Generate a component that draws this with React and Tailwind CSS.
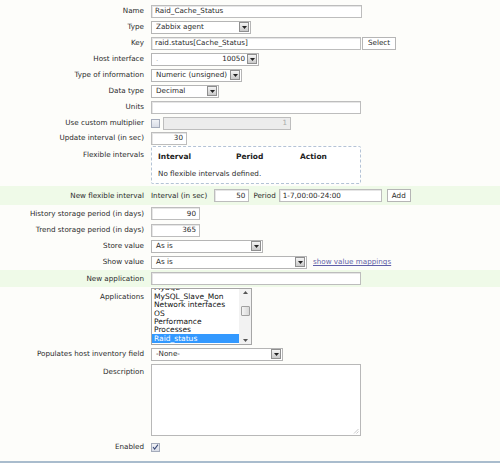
import React from "react";

const Arrow = () => (
  <span className="flex h-[10px] w-[10px] shrink-0 items-center justify-center border border-[#8f8f8f] bg-gradient-to-b from-[#f4f4f4] to-[#c9c9c9]">
    <svg width="5" height="3" viewBox="0 0 5 3">
      <path d="M0 0h5L2.5 3z" fill="#222" />
    </svg>
  </span>
);

const Select = ({ value, width, right }) => (
  <div
    className={`flex h-[13px] items-center justify-between border border-[#b5b5b5] bg-white pl-[4px] pr-[1px] ${width}`}
  >
    <span className="flex flex-1 justify-between pr-[2px]">
      <span>{value}</span>
      {right && <span>{right}</span>}
    </span>
    <Arrow />
  </div>
);

const Input = ({ value = "", width, align = "left", disabled }) => (
  <div
    className={`flex h-[13px] items-center border border-[#bdbdbd] px-[3px] ${width} ${
      align === "right" ? "justify-end" : ""
    } ${disabled ? "bg-[#ececec] text-[#aaa]" : "bg-white shadow-[inset_1px_1px_0_#e6e6e6]"}`}
  >
    {value}
  </div>
);

const Button = ({ children, width }) => (
  <div className={`flex h-[13px] items-center justify-center border border-[#b5b5b5] bg-white ${width}`}>
    {children}
  </div>
);

const Checkbox = ({ checked }) => (
  <span className="flex h-[9px] w-[9px] items-center justify-center border border-[#a5acbb] bg-gradient-to-b from-[#f0f2f6] to-[#d9dde7]">
    {checked && (
      <svg width="7" height="6" viewBox="0 0 7 6">
        <path d="M1 3l1.6 2L6 0.6" stroke="#3a4a78" strokeWidth="1.1" fill="none" />
      </svg>
    )}
  </span>
);

const Row = ({ label, h, green, top, children }) => (
  <div className={`flex ${top ? "items-start" : "items-center"} ${h} ${green ? "bg-[#effae8]" : ""}`}>
    <div className={`w-[151px] shrink-0 pr-[7px] text-right ${top ? "pt-[6px]" : ""}`}>{label}</div>
    <div className={`flex items-center gap-[3px] ${top ? "pt-[1px]" : ""}`}>{children}</div>
  </div>
);

const apps = ["MySQL", "MySQL_Slave_Mon", "Network interfaces", "OS", "Performance", "Processes", "Raid_status"];

export default function App() {
  return (
    <div
      className="flex h-[463px] w-[500px] flex-col border-b-2 border-[#a9bccd] bg-[#fdfdfa] pt-[3px] text-[7.2px] leading-none text-[#2a2a2a]"
      style={{ fontFamily: '"DejaVu Sans", Verdana, sans-serif' }}
    >
      <Row label="Name" h="h-[16px]">
        <Input value="Raid_Cache_Status" width="w-[211px]" />
      </Row>
      <Row label="Type" h="h-[16px]">
        <Select value="Zabbix agent" width="w-[100px]" />
      </Row>
      <Row label="Key" h="h-[16px]">
        <Input value="raid.status[Cache_Status]" width="w-[210px]" />
        <Button width="w-[34px] -ml-[2px]">Select</Button>
      </Row>
      <Row label="Host interface" h="h-[16px]">
        <Select value={<span className="text-[#aaa]">.</span>} right="10050" width="w-[108px]" />
      </Row>
      <Row label="Type of information" h="h-[16px]">
        <Select value="Numeric (unsigned)" width="w-[91px]" />
      </Row>
      <Row label="Data type" h="h-[16px]">
        <Select value="Decimal" width="w-[68px]" />
      </Row>
      <Row label="Units" h="h-[16px]">
        <Input width="w-[210px]" />
      </Row>
      <Row label="Use custom multiplier" h="h-[16px]">
        <Checkbox />
        <Input value="1" align="right" width="w-[128px] h-[11px]" disabled />
      </Row>
      <Row label="Update interval (in sec)" h="h-[14px]">
        <Input value="30" align="right" width="w-[36px]" />
      </Row>
      <Row label="Flexible intervals" h="h-[41px]" top>
        <div className="h-[38px] w-[210px] rounded-[2px] border border-dashed border-[#b4c3d6] bg-white px-[6px] pt-[6px]">
          <div className="flex text-[7.5px] font-bold text-[#222]">
            <span className="w-[78px]">Interval</span>
            <span className="w-[64px]">Period</span>
            <span>Action</span>
          </div>
          <div className="mt-[9px]">No flexible intervals defined.</div>
        </div>
      </Row>
      <Row label="New flexible interval" h="h-[19px]" green>
        <span className="pr-[4px]">Interval (in sec)</span>
        <Input value="50" align="right" width="w-[35px]" />
        <span className="pl-[1px]">Period</span>
        <Input value="1-7,00:00-24:00" width="w-[103px]" />
        <Button width="w-[24px] ml-[2px]">Add</Button>
      </Row>
      <Row label="History storage period (in days)" h="h-[17px]">
        <Input value="90" align="right" width="w-[49px]" />
      </Row>
      <Row label="Trend storage period (in days)" h="h-[16px]">
        <Input value="365" align="right" width="w-[49px]" />
      </Row>
      <Row label="Store value" h="h-[16px]">
        <Select value="As is" width="w-[112px]" />
      </Row>
      <Row label="Show value" h="h-[16px]">
        <Select value="As is" width="w-[156px]" />
        <span className="ml-[3px] text-[#5f5fa8] underline">show value mappings</span>
      </Row>
      <Row label="New application" h="h-[17px]" green>
        <Input width="w-[210px]" />
      </Row>
      <Row label="Applications" h="h-[59px]" top>
        <div className="flex h-[57px] w-[101px] overflow-hidden border border-[#a6a6a6] bg-white">
          <div className="flex-1 overflow-hidden">
            <div className="-mt-[5px] text-[7.5px]">
              {apps.map((a) => (
                <div
                  key={a}
                  className={`flex h-[8.4px] items-center px-[2px] ${
                    a === "Raid_status" ? "bg-[#3399ff] text-white" : "text-[#111]"
                  }`}
                >
                  {a}
                </div>
              ))}
            </div>
          </div>
          <div className="flex w-[12px] flex-col items-center justify-between bg-[#f2f2f2] py-[2px]">
            <svg width="5" height="3" viewBox="0 0 5 3">
              <path d="M0 3h5L2.5 0z" fill="#555" />
            </svg>
            <div className="mt-[12px] h-[10px] w-[9px] rounded-[1px] border border-[#a0a0a0] bg-gradient-to-r from-[#f4f4f4] to-[#d8d8d8]" />
            <div className="flex-1" />
            <svg width="5" height="3" viewBox="0 0 5 3">
              <path d="M0 0h5L2.5 3z" fill="#555" />
            </svg>
          </div>
        </div>
      </Row>
      <Row label="Populates host inventory field" h="h-[16px]">
        <Select value="-None-" width="w-[132px]" />
      </Row>
      <Row label="Description" h="h-[77px]" top>
        <div className="relative mt-[1px] h-[72px] w-[210px] border border-[#b8b8b8] bg-white">
          <svg className="absolute bottom-[1px] right-[1px]" width="6" height="6" viewBox="0 0 6 6">
            <path d="M5.5 1L1 5.5M5.5 3.5L3.5 5.5" stroke="#bbb" strokeWidth="0.8" />
          </svg>
        </div>
      </Row>
      <Row label="Enabled" h="h-[16px]">
        <Checkbox checked />
      </Row>
    </div>
  );
}
